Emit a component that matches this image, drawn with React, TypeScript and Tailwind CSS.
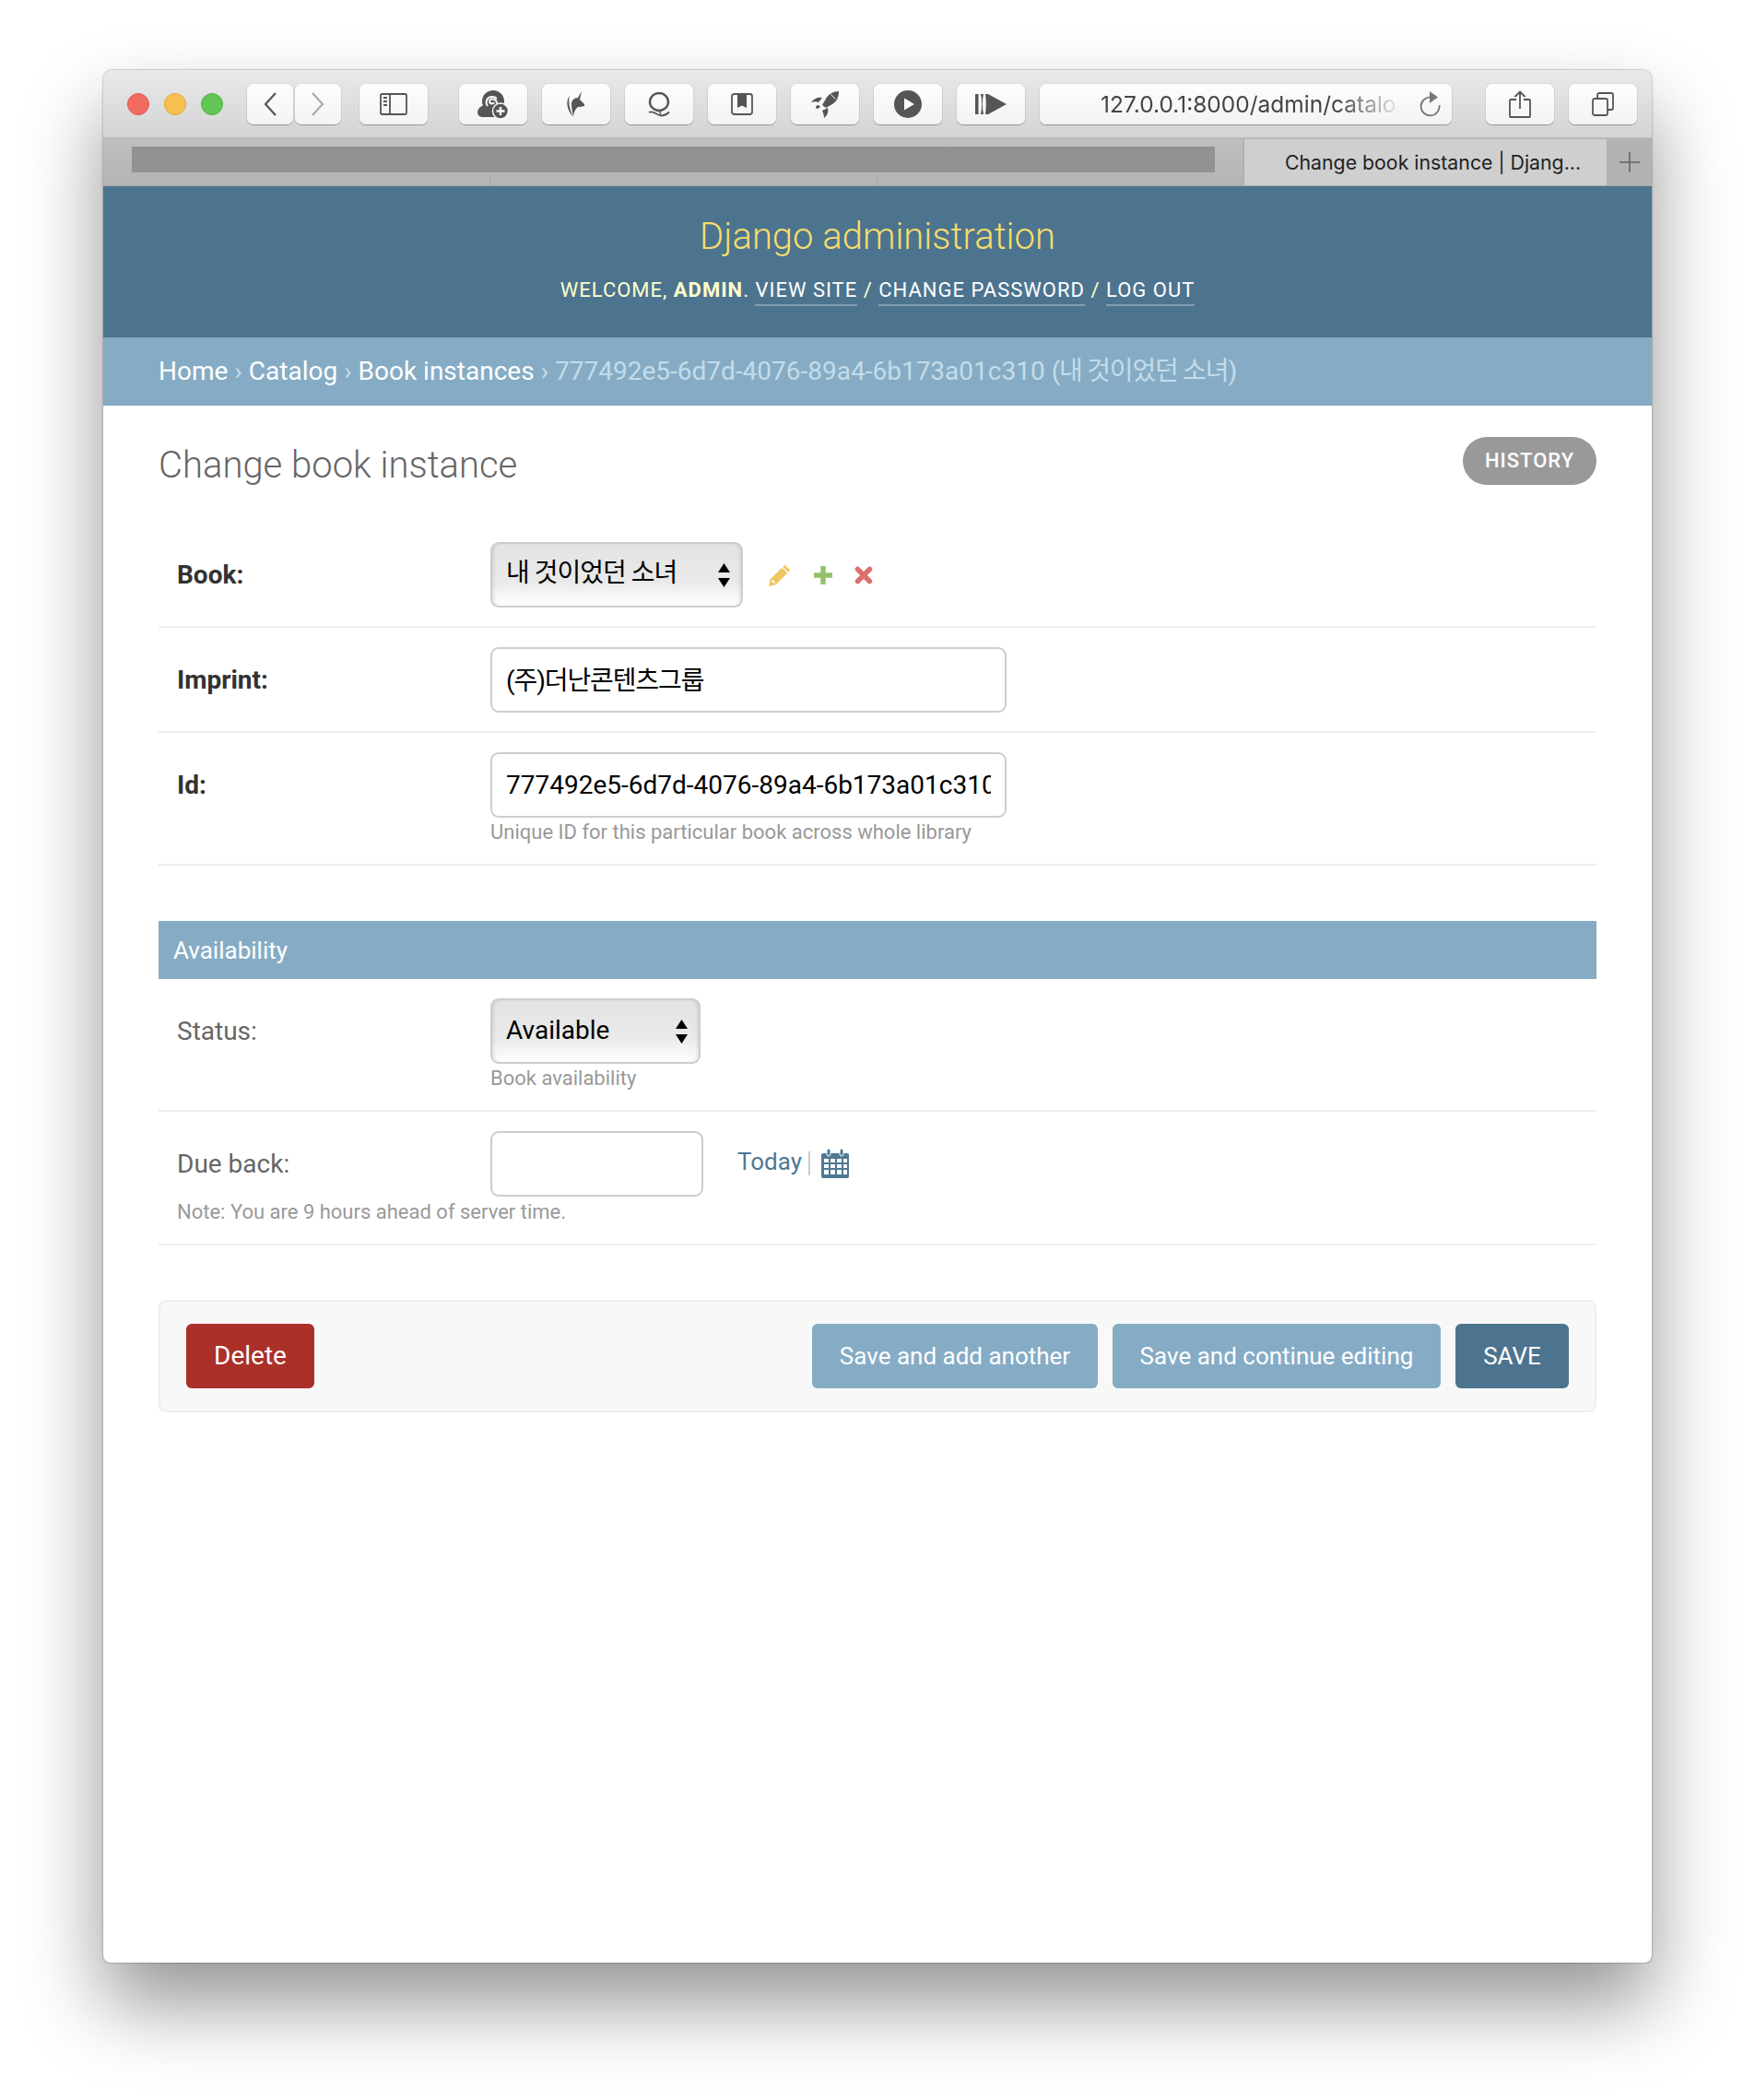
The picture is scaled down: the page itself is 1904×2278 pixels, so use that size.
import React from "react";

const roboto = "font-['Roboto','Noto_Sans_CJK_KR',sans-serif]";

function ToolButton({
  width = "w-[74px]",
  children,
}: {
  width?: string;
  children?: React.ReactNode;
}) {
  return (
    <div
      className={`${width} h-11 shrink-0 flex items-center justify-center rounded-[7px] bg-gradient-to-b from-[#fdfdfd] to-[#f3f3f3] shadow-[0_0_0_1px_rgba(0,0,0,0.04),0_1px_1px_rgba(0,0,0,0.28)]`}
    >
      {children}
    </div>
  );
}

function ShellIcon() {
  return (
    <svg width="34" height="31" viewBox="0 0 34 31">
      <circle cx="17" cy="12" r="12" fill="#555" />
      <path d="M0 24c0-4 4-8 9-8l12 2v11H6c-3 0-6-2-6-5z" fill="#555" />
      <path
        d="M18 13a2.500 2.500 0 1 1-2-3.500c3 0 5 2 5 5M11 17c-3-4-1-10 5-10 2 0 4 1 5 2"
        fill="none"
        stroke="#fbfbfb"
        strokeWidth="2"
      />
      <circle cx="25" cy="22.500" r="8.500" fill="#555" stroke="#fbfbfb" strokeWidth="1.500" />
      <path d="M25 18v9M20.500 22.500h9" stroke="#fbfbfb" strokeWidth="2.400" />
    </svg>
  );
}

function UnicornIcon() {
  return (
    <svg width="20" height="28" viewBox="0 0 20 28">
      <path d="M3 5C-1 10-1 19 7 28 3 20 1 12 3 5z" fill="#555" />
      <path d="M16 0 12 7C8 7 5 10 5 14c0 4 1 8 2 13 1-5 2-8 5-10h2l5-1v-2l-5-5 2-9z" fill="#555" />
    </svg>
  );
}

function QIcon() {
  return (
    <svg className="mt-[1px]" width="26" height="27" viewBox="0 0 26 27">
      <ellipse cx="13" cy="10.500" rx="10" ry="9.500" fill="none" stroke="#555" strokeWidth="2.400" />
      <path d="M2 22c5-3 9 4 14 3.500 4-.4 6-2 8-4" fill="none" stroke="#555" strokeWidth="1.800" />
      <path d="M13 20l2 4" stroke="#555" strokeWidth="1.500" />
    </svg>
  );
}

function BookIcon() {
  return (
    <svg width="24" height="24" viewBox="0 0 24 24">
      <rect x="1" y="1" width="22" height="22" rx="2.500" fill="none" stroke="#555" strokeWidth="1.800" />
      <path d="M7 1h10v15l-5-2.500L7 16z" fill="#555" />
    </svg>
  );
}

function RocketIcon() {
  return (
    <svg width="30" height="29" viewBox="0 0 30 29">
      <path d="M30 0c-6 0-11 3-14 8l-4 7 4 3 7-4c5-3 7-8 7-14z" fill="#555" />
      <path d="M12 7C7 6 3 8 0 12c3-1 6-1 8 0l4-5zM18 18c1 4 0 8-4 11 0-3-1-6-2-8l6-3z" fill="#555" />
      <path d="M8 15c-2 0-3 1-3 3l2 1 3-2-2-2z" fill="#555" />
      <path d="M21.500 3.500l5 5" stroke="#fbfbfb" strokeWidth="1" />
    </svg>
  );
}

function SkipIcon() {
  return (
    <svg width="34" height="22" viewBox="0 0 34 22">
      <rect x="0" y="0" width="3.500" height="22" fill="#555" />
      <path d="M6 0h3c-1.500 7-1.500 15 0 22H6c1.500-7 1.500-15 0-22z" fill="#555" />
      <path d="M11 0h3l20 11-20 11h-3c1-7 1-15 0-22z" fill="#555" />
    </svg>
  );
}

function Chrome() {
  return (
    <>
      <div className="h-[75px] flex items-center pt-[1px] pl-[26px] bg-gradient-to-b from-[#e9e9e9] to-[#d4d4d4] border-b-2 border-[#b9b9b9]">
        <div className="flex gap-4 w-[130px] shrink-0">
          <span className="w-6 h-6 rounded-full bg-[#f26b60] border border-[#dd5a50]" />
          <span className="w-6 h-6 rounded-full bg-[#f7c04f] border border-[#dfa93d]" />
          <span className="w-6 h-6 rounded-full bg-[#62c655] border border-[#52ae47]" />
        </div>
        <div className="flex gap-[2px] mr-5">
          <ToolButton width="w-[50px]">
            <svg width="16" height="26" viewBox="0 0 16 26">
              <path d="M14 1 3 13l11 12" fill="none" stroke="#555" strokeWidth="2.200" />
            </svg>
          </ToolButton>
          <ToolButton width="w-[50px]">
            <svg width="16" height="26" viewBox="0 0 16 26">
              <path d="m2 1 11 12L2 25" fill="none" stroke="#aaa" strokeWidth="2.200" />
            </svg>
          </ToolButton>
        </div>
        <ToolButton>
          <svg width="30" height="24" viewBox="0 0 30 24">
            <rect x="1" y="1" width="28" height="22" rx="1.500" fill="none" stroke="#555" strokeWidth="1.800" />
            <path d="M11 1v22" stroke="#555" strokeWidth="1.800" />
            <path d="M4 5h4M4 9h4M4 13h4" stroke="#555" strokeWidth="2" />
          </svg>
        </ToolButton>
        <div className="flex gap-4 ml-[34px] mr-4">
          <ToolButton>
            <ShellIcon />
          </ToolButton>
          <ToolButton>
            <UnicornIcon />
          </ToolButton>
          <ToolButton>
            <QIcon />
          </ToolButton>
          <ToolButton>
            <BookIcon />
          </ToolButton>
          <ToolButton>
            <RocketIcon />
          </ToolButton>
          <ToolButton>
            <svg width="30" height="30" viewBox="0 0 30 30">
              <circle cx="15" cy="15" r="15" fill="#555" />
              <path d="M11 8.500 22 15l-11 6.500z" fill="#fbfbfb" />
            </svg>
          </ToolButton>
          <ToolButton>
            <SkipIcon />
          </ToolButton>
        </div>
        <div className="relative w-[447px] h-11 shrink-0 flex items-center rounded-[7px] bg-gradient-to-b from-[#fdfdfd] to-[#f3f3f3] shadow-[0_0_0_1px_rgba(0,0,0,0.04),0_1px_1px_rgba(0,0,0,0.28)]">
          <div className="ml-[66px] whitespace-nowrap font-['Inter',sans-serif] text-[24.500px] text-[#444] [mask-image:linear-gradient(to_right,black_80%,rgba(0,0,0,0.1)_100%)]">
            127.0.0.1:8000/admin/catalo
          </div>
          <svg className="ml-auto mr-[12px]" width="24" height="28" viewBox="0 0 24 28">
            <path d="M14 6.500A10 10 0 1 0 22.500 15" fill="none" stroke="#777" strokeWidth="1.800" />
            <path d="M12 0l9 6.500-9 6.500z" fill="#777" />
          </svg>
        </div>
        <div className="flex gap-4 ml-[37px]">
          <ToolButton>
            <svg width="24" height="30" viewBox="0 0 24 30">
              <path d="M8 10H2a1 1 0 0 0-1 1v17a1 1 0 0 0 1 1h20a1 1 0 0 0 1-1V11a1 1 0 0 0-1-1h-6" fill="none" stroke="#555" strokeWidth="1.800" />
              <path d="M12 20V2M6.500 7 12 1.500 17.500 7" fill="none" stroke="#555" strokeWidth="1.800" />
            </svg>
          </ToolButton>
          <ToolButton>
            <svg width="24" height="26" viewBox="0 0 24 26">
              <rect x="1" y="7" width="16" height="18" rx="2" fill="none" stroke="#555" strokeWidth="1.800" />
              <path d="M6 7V3a2 2 0 0 1 2-2h13a2 2 0 0 1 2 2v14a2 2 0 0 1-2 2h-4" fill="none" stroke="#555" strokeWidth="1.800" />
            </svg>
          </ToolButton>
        </div>
      </div>
      <div className="h-[51px] flex bg-gradient-to-b from-[#bfbfbf] to-[#b4b4b4] border-b border-[#a9a9a9]">
        <div className="relative w-[1236px] shrink-0 pl-[31px] pr-[30px] pt-[8px]">
          <div className="h-7 w-[1175px] bg-[#929292]" />
          <span className="absolute left-[419px] bottom-0 h-[10px] w-[1px] bg-[#a3a3a3]" />
          <span className="absolute left-[839px] bottom-0 h-[10px] w-[1px] bg-[#a3a3a3]" />
        </div>
        <div className="w-[395px] shrink-0 flex items-center justify-center bg-[#cfcfcf] border-l-2 border-[#b0b0b0] font-['Inter',sans-serif] text-[21.300px] text-[#222] whitespace-nowrap pl-4 pt-[2px]">
          Change book instance | Djang...
        </div>
        <div className="flex-1 flex items-center justify-center bg-[#b2b2b2]">
          <svg width="24" height="24" viewBox="0 0 24 24">
            <path d="M12 1v22M1 12h22" stroke="#666" strokeWidth="1.600" />
          </svg>
        </div>
      </div>
    </>
  );
}

function FakeSelect({
  width,
  label,
  tight,
}: {
  width: string;
  label: string;
  tight?: boolean;
}) {
  return (
    <div
      className={`${width} h-[71px] shrink-0 flex items-center justify-between pl-[15px] pr-[12px] rounded-[9px] border-2 border-[#cdcdcd] bg-gradient-to-b from-[#e4e4e4] via-[#e9e9e9] via-60% to-white shadow-[inset_3px_0_4px_-2px_rgba(0,0,0,0.12),inset_-3px_0_4px_-2px_rgba(0,0,0,0.12)] text-[28px] text-black`}
    >
      <span className={tight ? "-mt-[4px] tracking-[-1px]" : "-mt-[2px]"}>{label}</span>
      <svg width="13" height="26" viewBox="0 0 13 26">
        <path d="M6.500 0 13 10H0zM6.500 26 0 16h13z" fill="#000" />
      </svg>
    </div>
  );
}

function TextBox({
  width,
  value,
  tight,
}: {
  width: string;
  value?: string;
  tight?: boolean;
}) {
  return (
    <input
      readOnly
      value={value ?? ""}
      className={`${width} h-[71px] shrink-0 pl-[15px] pr-[15px] rounded-[9px] border-2 border-[#cdcdcd] bg-white text-[28px] text-black outline-none ${tight ? "tracking-[-1.100px] pb-[4px]" : ""} ${roboto}`}
    />
  );
}

function Row({
  label,
  bold,
  children,
  help,
  note,
}: {
  label: string;
  bold?: boolean;
  children: React.ReactNode;
  help?: string;
  note?: string;
}) {
  return (
    <div className="pt-[21px] pb-[20px] pl-5 border-b-2 border-[#eeeeee]">
      <div className="flex items-center">
        <label className={`w-[340px] shrink-0 text-[28px] pt-[1px] ${bold ? "font-bold text-[#333]" : "text-[#666]"}`}>
          {label}
        </label>
        {children}
      </div>
      {help && (
        <p className="ml-[340px] mt-[3px] mb-[1px] text-[22px] leading-[26px] text-[#999]">{help}</p>
      )}
      {note && <p className="mt-[4px] mb-[1px] text-[22px] leading-[26px] text-[#999]">{note}</p>}
    </div>
  );
}

function Header() {
  return (
    <div className="h-[164px] bg-[#4d748f] flex flex-col items-center pt-[31px] shrink-0">
      <div className="text-[40px] leading-[48px] font-light text-[#f5dd6b]">Django administration</div>
      <div className="mt-[19px] text-[22px] leading-[30px] tracking-[1px] text-[#ffffcc] uppercase whitespace-nowrap">
        Welcome, <strong className="font-bold">admin</strong>.{" "}
        <a className="inline-block text-white border-b-2 border-white/30">View site</a> /{" "}
        <a className="inline-block text-white border-b-2 border-white/30">Change password</a> /{" "}
        <a className="inline-block text-white border-b-2 border-white/30">Log out</a>
      </div>
    </div>
  );
}

function Breadcrumbs() {
  return (
    <div className="h-[74px] bg-[#86acc5] flex items-center pl-[60px] text-[28px] text-[#c4dce8] whitespace-nowrap shrink-0">
      <a className="text-white">Home</a>
      <span className="mx-[7px]">›</span>
      <a className="text-white">Catalog</a>
      <span className="mx-[7px]">›</span>
      <a className="text-white">Book instances</a>
      <span className="mx-[7px]">›</span>
      <span>
        777492e5-6d7d-4076-89a4-6b173a01c310 <span className="tracking-[-1.200px]">(내 것이었던 소녀)</span>
      </span>
    </div>
  );
}

function RelatedIcons() {
  return (
    <div className="flex items-center gap-[24px] ml-[27px]">
      <svg width="26" height="26" viewBox="0 0 24 24">
        <path d="M17 1.500 22.500 7 8 21.500l-7 1.500 1.500-7z" fill="#efc661" />
        <path d="M14.500 4l5.500 5.500" stroke="#fff" strokeWidth="1.200" />
        <path d="M4 17l3 3" stroke="#fff" strokeWidth="1.500" />
      </svg>
      <svg width="20" height="20" viewBox="0 0 20 20">
        <path d="M10 1v18M1 10h18" stroke="#92c36a" strokeWidth="5.500" strokeLinecap="round" />
      </svg>
      <svg width="20" height="20" viewBox="0 0 20 20">
        <path d="M3.500 3.500l13 13M16.500 3.500l-13 13" stroke="#dd6f6c" strokeWidth="5.500" strokeLinecap="round" />
      </svg>
    </div>
  );
}

function CalendarIcon() {
  return (
    <svg width="30" height="32" viewBox="0 0 30 32">
      <path d="M2 5h26a2 2 0 0 1 2 2v23a2 2 0 0 1-2 2H2a2 2 0 0 1-2-2V7a2 2 0 0 1 2-2z" fill="#4f7892" />
      <rect x="6" y="0" width="4" height="8" rx="2" fill="#4f7892" stroke="#fff" strokeWidth="1" />
      <rect x="20" y="0" width="4" height="8" rx="2" fill="#4f7892" stroke="#fff" strokeWidth="1" />
      <path
        d="M3 11h5v4H3zM10 11h5v4h-5zM17 11h5v4h-5zM24 11h4v4h-4zM3 17h5v4H3zM10 17h5v4h-5zM17 17h5v4h-5zM24 17h4v4h-4zM3 23h5v5H3zM10 23h5v5h-5zM17 23h5v5h-5zM24 23h4v5h-4z"
        fill="#fff"
      />
    </svg>
  );
}

function SubmitRow() {
  return (
    <div className="mt-[59px] h-[122px] flex items-center justify-end gap-4 pl-[28px] pr-[28px] rounded-[8px] border-2 border-[#eeeeee] bg-[#f8f8f8] text-[26px] text-white">
      <button className="mr-auto h-[70px] w-[139px] rounded-[6px] bg-[#ab3029] text-[28px]">Delete</button>
      <button className="h-[70px] w-[310px] rounded-[6px] bg-[#86acc5]">Save and add another</button>
      <button className="h-[70px] w-[356px] rounded-[6px] bg-[#86acc5]">Save and continue editing</button>
      <button className="h-[70px] w-[123px] rounded-[6px] bg-[#4d748f] uppercase">Save</button>
    </div>
  );
}

export default function App() {
  return (
    <div className="min-h-[2278px] bg-white pt-[76px] px-[112px] overflow-hidden">
      <div className="h-[2053px] flex flex-col rounded-t-[10px] rounded-b-[8px] overflow-hidden bg-white shadow-[0_45px_85px_rgba(0,0,0,0.42),0_0_2px_rgba(0,0,0,0.55)]">
        <Chrome />
        <div className={`flex-1 flex flex-col ${roboto}`}>
          <Header />
          <Breadcrumbs />
          <div className="px-[60px]">
            <div className="h-[127px] flex items-start justify-between pt-[34px]">
              <h1 className="text-[40px] leading-[62px] font-light text-[#666]">Change book instance</h1>
              <a className="h-[52px] w-[145px] flex items-center justify-center pb-[2px] rounded-full bg-[#999] text-[22px] font-medium tracking-[1px] text-white uppercase">
                History
              </a>
            </div>
            <Row label="Book:" bold>
              <FakeSelect width="w-[274px]" label="내 것이었던 소녀" tight />
              <RelatedIcons />
            </Row>
            <Row label="Imprint:" bold>
              <TextBox width="w-[560px]" value="(주)더난콘텐츠그룹" tight />
            </Row>
            <Row label="Id:" bold help="Unique ID for this particular book across whole library">
              <TextBox width="w-[560px]" value="777492e5-6d7d-4076-89a4-6b173a01c310" />
            </Row>
            <h2 className="mt-[60px] h-[63px] flex items-center pl-[16px] pt-[1px] bg-[#86acc5] text-[26px] font-normal text-white">
              Availability
            </h2>
            <Row label="Status:" help="Book availability">
              <FakeSelect width="w-[228px]" label="Available" />
            </Row>
            <Row label="Due back:" note="Note: You are 9 hours ahead of server time.">
              <TextBox width="w-[231px]" />
              <a className="ml-[37px] -mt-[4px] text-[26px] text-[#4f7892]">Today</a>
              <span className="ml-[7px] -mt-[2px] h-[26px] w-[2px] bg-[#cccccc]" />
              <span className="ml-[12px] -mt-[2px]">
                <CalendarIcon />
              </span>
            </Row>
            <SubmitRow />
          </div>
        </div>
      </div>
    </div>
  );
}
